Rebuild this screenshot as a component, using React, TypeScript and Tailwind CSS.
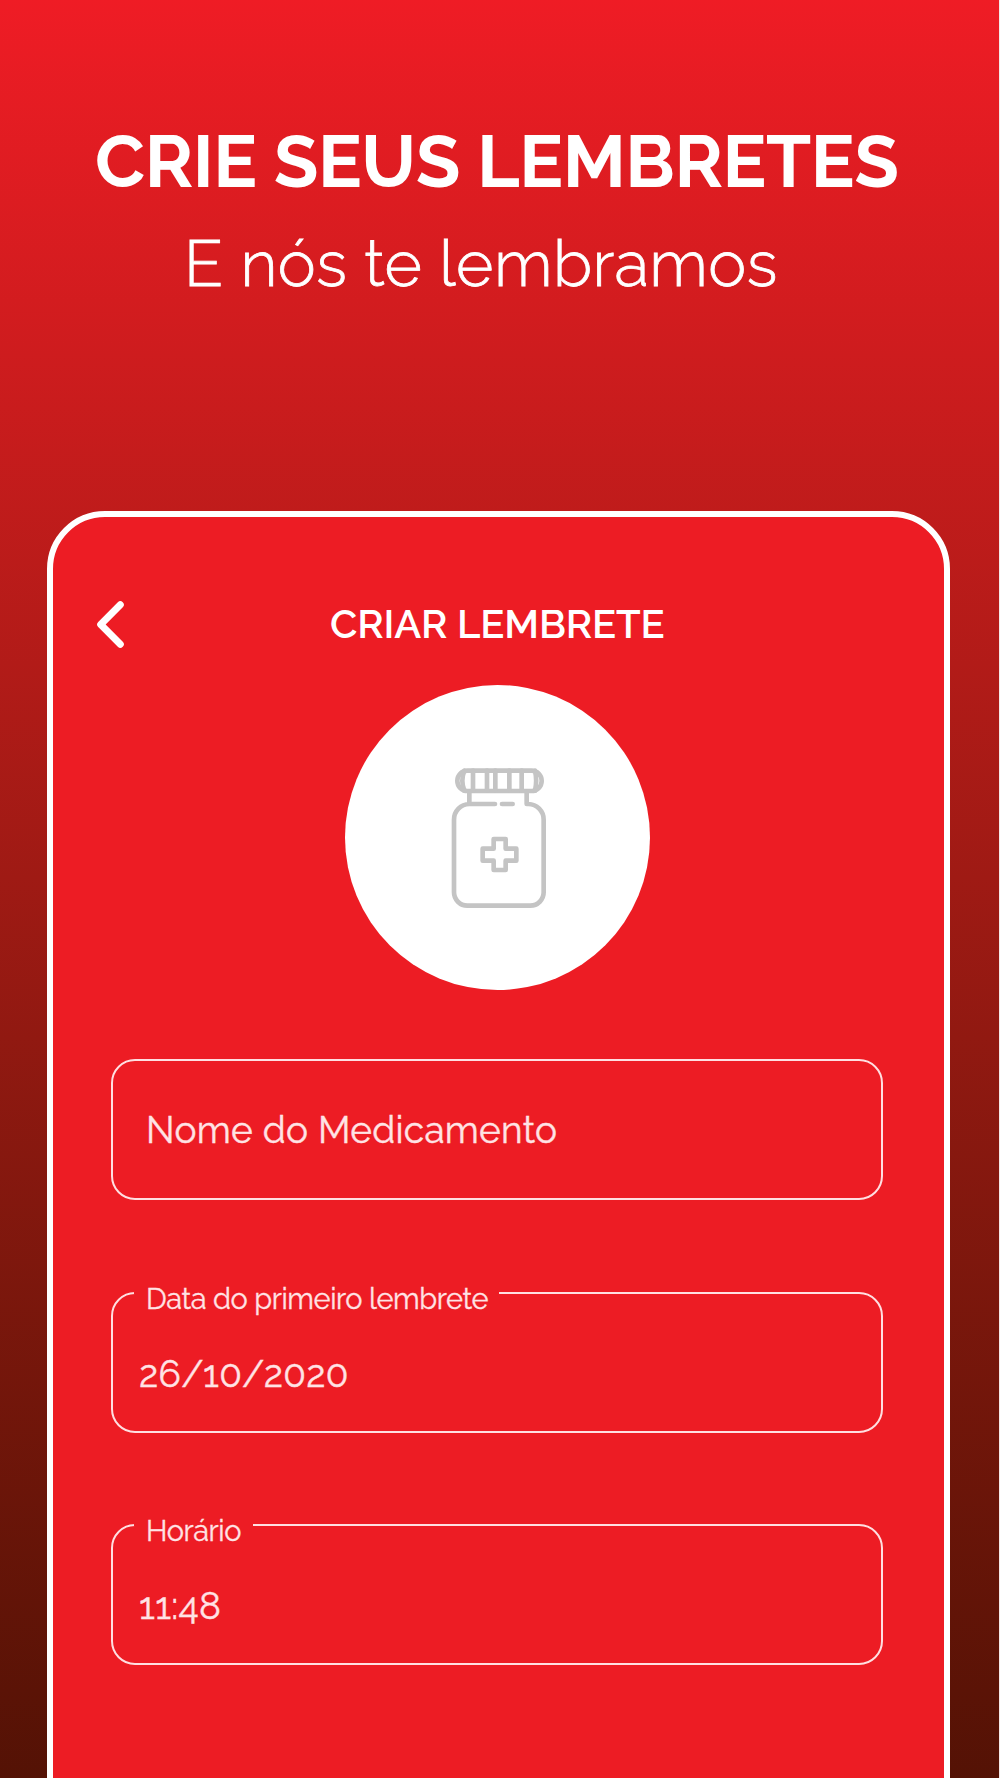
import React from 'react';

interface FieldProps {
  label: string;
  value: string;
  notchClass: string;
}

const BackIcon: React.FC = () => (
  <svg width="36" height="52" viewBox="0 0 36 52" fill="none" stroke="#fff" strokeWidth="7" strokeLinecap="round" strokeLinejoin="round">
    <path d="M28.3 6.7 8.7 26.5l19.6 19.8" />
  </svg>
);

const BottleIcon: React.FC = () => (
  <svg className="ml-[6px]" width="140" height="175" viewBox="0 0 420 525" fill="none" stroke="#c4c4c4" strokeWidth="14" strokeLinecap="round" strokeLinejoin="round">
    {/* lid */}
    <rect x="82" y="62" width="253" height="61" rx="30" />
    <path d="M103 62q-12 30 0 60M129 62v60M171 62v60M196 62v60M238 62v60M275 62v60M315 62q7 30 0 60" />
    {/* jar */}
    <path d="M118 126v36M195 162h-77a47 47 0 0 0-46 47v218a40 40 0 0 0 40 40h189a40 40 0 0 0 40-40V209a47 47 0 0 0-46-47h-5v-36M216 162h32" />
    {/* cross */}
    <path d="M191 267h36v29h32v36h-32v28h-36v-28h-33v-36h33z" />
  </svg>
);

const Field: React.FC<FieldProps> = ({ label, value, notchClass }) => (
  <fieldset className="h-[141px] rounded-[24px] border-2 border-[#ffdfe1] pl-[21px]">
    <legend className={`h-[2px] ${notchClass}`}>
      <div className="flex h-[15px] items-center pl-[12px]">
        <span className="text-[29px] leading-none tracking-[-0.45px] whitespace-nowrap [-webkit-text-stroke:0.3px]">{label}</span>
      </div>
    </legend>
    <p className="mt-[56px] pl-[5px] text-[37px] leading-[48px] tracking-[0.3px] [-webkit-text-stroke:0.4px]">{value}</p>
  </fieldset>
);

const App: React.FC = () => {
  return (
    <div className="flex h-[1778px] w-[1000px] flex-col overflow-hidden border-r border-[#f4e8e8] bg-linear-to-b from-[#ef1c25] to-[#541205] font-['Raleway','Lato',sans-serif] text-white">
      <header className="h-[511px] shrink-0 pt-[117px] whitespace-nowrap">
        <h1 className="pl-[95px] text-[73px] leading-[88px] font-bold tracking-[-0.45px]">CRIE SEUS LEMBRETES</h1>
        <p className="mt-[21px] pl-[184px] text-[64px] leading-[76px] font-light tracking-[0.45px] [-webkit-text-stroke:0.8px]">E nós te lembramos</p>
      </header>

      <main className="ml-[47px] h-[1300px] w-[903px] shrink-0 rounded-t-[58px] border-[6px] border-white bg-[#ed1c24]">
        <div className="mt-[81px] flex h-[52px] items-center pl-[39px]">
          <BackIcon />
          <h2 className="ml-[202px] text-[40px] leading-none font-semibold tracking-[-0.15px] whitespace-nowrap">CRIAR LEMBRETE</h2>
        </div>

        <div className="mt-[35px] ml-[291.5px] flex size-[305px] items-center justify-center rounded-full bg-white">
          <BottleIcon />
        </div>

        <form className="mt-[69px] ml-[58px] flex w-[772px] flex-col gap-[91.5px] text-[#ffe3e5]">
          <div className="flex h-[141px] items-center rounded-[24px] border-2 border-[#ffdfe1] pl-[33px]">
            <span className="pt-[2px] text-[37px] leading-none tracking-[0.25px] whitespace-nowrap [-webkit-text-stroke:0.4px]">Nome do Medicamento</span>
          </div>
          <Field label="Data do primeiro lembrete" value="26/10/2020" notchClass="w-[365px]" />
          <Field label="Horário" value="11:48" notchClass="w-[119px]" />
        </form>
      </main>
    </div>
  );
};

export default App;
